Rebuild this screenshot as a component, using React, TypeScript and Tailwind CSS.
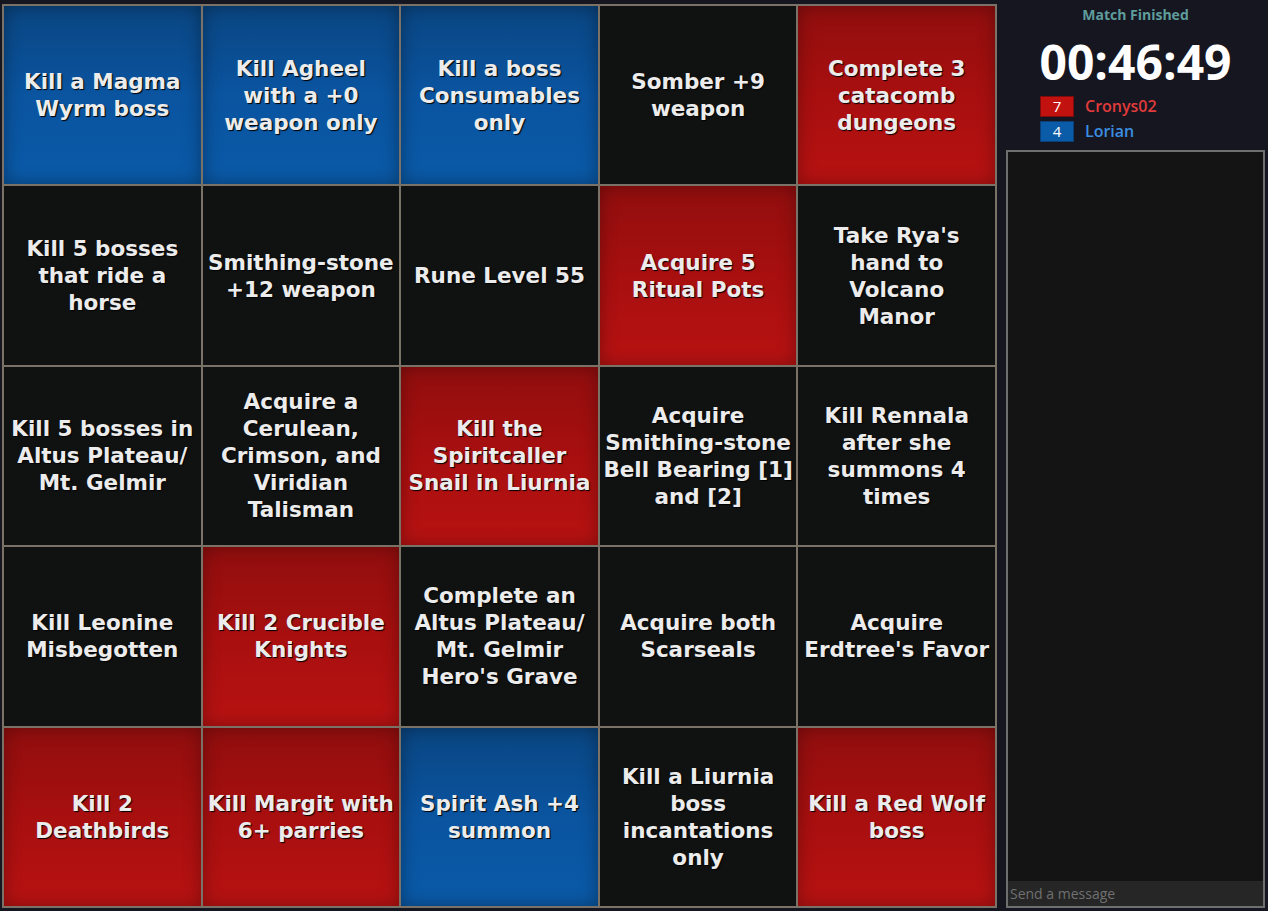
type Team = 'blue' | 'red' | 'none';

const cells: { lines: string[]; team: Team }[] = [
  { lines: ['Kill a Magma', 'Wyrm boss'], team: 'blue' },
  { lines: ['Kill Agheel', 'with a +0', 'weapon only'], team: 'blue' },
  { lines: ['Kill a boss', 'Consumables', 'only'], team: 'blue' },
  { lines: ['Somber +9', 'weapon'], team: 'none' },
  { lines: ['Complete 3', 'catacomb', 'dungeons'], team: 'red' },

  { lines: ['Kill 5 bosses', 'that ride a', 'horse'], team: 'none' },
  { lines: ['Smithing-stone', '+12 weapon'], team: 'none' },
  { lines: ['Rune Level 55'], team: 'none' },
  { lines: ['Acquire 5', 'Ritual Pots'], team: 'red' },
  { lines: ["Take Rya's", 'hand to', 'Volcano', 'Manor'], team: 'none' },

  { lines: ['Kill 5 bosses in', 'Altus Plateau/', 'Mt. Gelmir'], team: 'none' },
  { lines: ['Acquire a', 'Cerulean,', 'Crimson, and', 'Viridian', 'Talisman'], team: 'none' },
  { lines: ['Kill the', 'Spiritcaller', 'Snail in Liurnia'], team: 'red' },
  { lines: ['Acquire', 'Smithing-stone', 'Bell Bearing [1]', 'and [2]'], team: 'none' },
  { lines: ['Kill Rennala', 'after she', 'summons 4', 'times'], team: 'none' },

  { lines: ['Kill Leonine', 'Misbegotten'], team: 'none' },
  { lines: ['Kill 2 Crucible', 'Knights'], team: 'red' },
  { lines: ['Complete an', 'Altus Plateau/', 'Mt. Gelmir', "Hero's Grave"], team: 'none' },
  { lines: ['Acquire both', 'Scarseals'], team: 'none' },
  { lines: ['Acquire', "Erdtree's Favor"], team: 'none' },

  { lines: ['Kill 2', 'Deathbirds'], team: 'red' },
  { lines: ['Kill Margit with', '6+ parries'], team: 'red' },
  { lines: ['Spirit Ash +4', 'summon'], team: 'blue' },
  { lines: ['Kill a Liurnia', 'boss', 'incantations', 'only'], team: 'none' },
  { lines: ['Kill a Red Wolf', 'boss'], team: 'red' },
];

const teamClass: Record<Team, string> = {
  blue: 'bg-gradient-to-b from-[#0a4682] via-[#0a54a0] to-[#0a5aa8] shadow-[inset_0_0_18px_rgba(0,0,0,0.35)]',
  red: 'bg-gradient-to-b from-[#910e0e] via-[#a80f0f] to-[#b81212] shadow-[inset_0_0_18px_rgba(0,0,0,0.3)]',
  none: 'bg-[#101111]',
};

function Cell({ lines, team }: { lines: string[]; team: Team }) {
  return (
    <div className={`flex flex-col items-center justify-center text-center ${teamClass[team]}`}>
      {lines.map((l, i) => (
        <span
          key={i}
          className="block whitespace-nowrap text-[21.5px] leading-[27px] font-bold text-[#ececec] [text-shadow:1px_1px_1px_#000]"
          style={{ fontFamily: "'DejaVu Sans', Verdana, sans-serif" }}
        >
          {l}
        </span>
      ))}
    </div>
  );
}

export default function App() {
  return (
    <div className="flex h-[911px] w-full bg-[#161620] overflow-hidden">
      {/* Board */}
      <div className="ml-[2px] mt-[4px] h-[904px] w-[995px] shrink-0 grid grid-cols-5 grid-rows-5 gap-[2px] p-[2px] bg-[#7a7266]">
        {cells.map((c, i) => (
          <Cell key={i} lines={c.lines} team={c.team} />
        ))}
      </div>

      {/* Sidebar */}
      <div
        className="ml-[9px] mr-[3px] flex flex-1 flex-col"
        style={{ fontFamily: "'Open Sans', 'Noto Sans', sans-serif" }}
      >
        <div className="pt-[5px] text-center text-[14px] font-bold leading-[20px] text-[#5e9d9c]">
          Match Finished
        </div>
        <div className="mt-[12px] text-center text-[48px] font-bold leading-[50px] text-white">
          00:46:49
        </div>
        <div className="mt-[9px] flex flex-col gap-[4px] pl-[34px]">
          <div className="flex h-[21px] items-center gap-[11px]">
            <div className="flex h-[21px] w-[34px] items-center justify-center border border-[#7e0c0c] bg-[#c2120f] text-[15px] text-white">
              7
            </div>
            <span className="text-[16px] font-semibold leading-[21px] text-[#e13b3b]">Cronys02</span>
          </div>
          <div className="flex h-[21px] items-center gap-[11px]">
            <div className="flex h-[21px] w-[34px] items-center justify-center border border-[#0a3f78] bg-[#0a5ba8] text-[15px] text-white">
              4
            </div>
            <span className="text-[16px] font-semibold leading-[21px] text-[#3a8ee0]">Lorian</span>
          </div>
        </div>

        {/* Chat */}
        <div className="mt-[8px] mb-[3px] flex flex-1 flex-col border-2 border-[#6f6f6f] bg-[#141414]">
          <div className="flex-1" />
          <input
            className="h-[25px] w-full bg-[#262626] px-[2px] text-[14px] text-[#cccccc] outline-none placeholder:text-[#707070]"
            placeholder="Send a message"
          />
        </div>
      </div>
    </div>
  );
}
